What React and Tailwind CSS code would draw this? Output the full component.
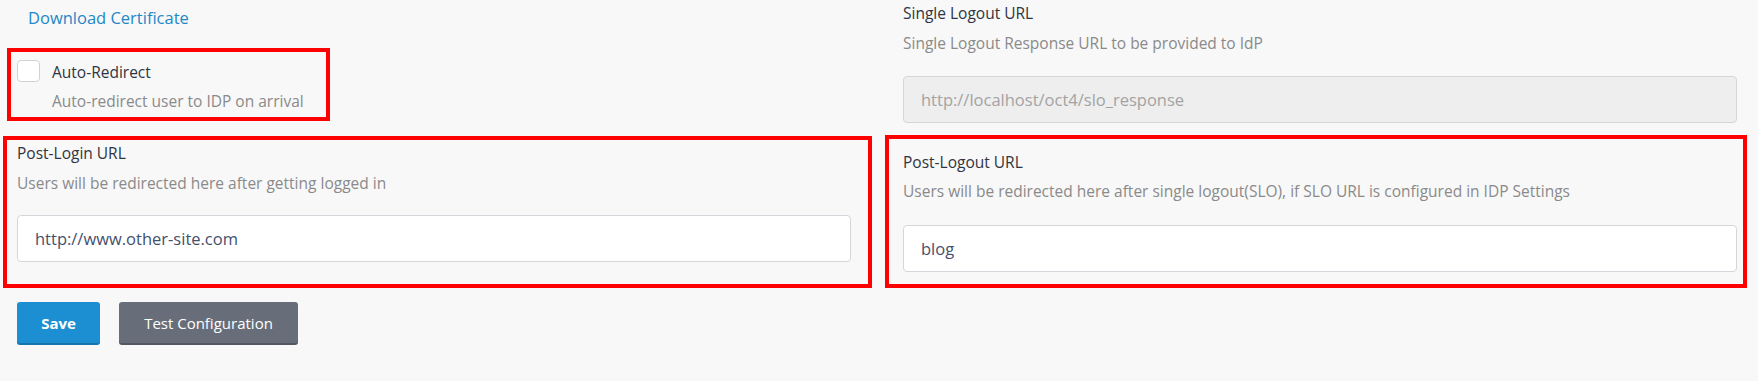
import React from "react";

export default function App() {
  return (
    <div className="min-h-[381px] w-full bg-[#f8f8f8] font-['Open_Sans',sans-serif] text-[15.5px]">
      <div className="flex pl-[17px] pr-[21px] gap-[52px]">
        {/* Left column */}
        <div className="w-[834px] shrink-0 pt-[6px]">
          <a className="ml-[11px] block text-[16.5px] leading-[24px] text-[#1f87c7]">Download Certificate</a>

          <div className="mt-[18px] ml-[-10px] w-[323px] h-[73px] border-4 border-[#ff0000] pl-[6px] pt-[8px] flex gap-[12px]">
            <div className="w-[23px] h-[22px] shrink-0 rounded-[4px] border border-[#cfd3d7] bg-white"></div>
            <div className="mt-[1px]">
              <div className="leading-[22px] text-[#2f3542]">Auto-Redirect</div>
              <div className="mt-[7px] leading-[22px] text-[#8a8a8a]">Auto-redirect user to IDP on arrival</div>
            </div>
          </div>

          <div className="mt-[15px] ml-[-14px] w-[869px] h-[152px] border-4 border-[#ff0000] pl-[10px] pt-[2px]">
            <div className="leading-[22px] text-[#2f3542]">Post-Login URL</div>
            <div className="mt-[8px] leading-[22px] text-[#8a8a8a]">Users will be redirected here after getting logged in</div>
            <input
              readOnly
              value="http://www.other-site.com"
              className="mt-[21px] block w-[834px] h-[47px] rounded-[4px] border border-[#d3d7db] bg-white pl-[17px] text-[16.5px] text-[#45506c] outline-none"
            />
          </div>

          <div className="mt-[14px] flex gap-[19px]">
            <button className="w-[83px] h-[43px] rounded-[3px] bg-[#1c8fd2] text-white font-bold text-[15px] shadow-[inset_0_-2px_0_rgba(0,0,0,0.18)]">
              Save
            </button>
            <button className="w-[179px] h-[43px] rounded-[3px] bg-[#686e79] text-white text-[15px] shadow-[inset_0_-2px_0_rgba(0,0,0,0.2)]">
              Test Configuration
            </button>
          </div>
        </div>

        {/* Right column */}
        <div className="w-[834px] shrink-0 pt-[2px]">
          <div className="leading-[22px] text-[#2f3542]">Single Logout URL</div>
          <div className="mt-[8px] leading-[22px] text-[#8a8a8a]">Single Logout Response URL to be provided to IdP</div>
          <input
            disabled
            value="http://localhost/oct4/slo_response"
            readOnly
            className="mt-[22px] block w-[834px] h-[47px] rounded-[4px] border border-[#d3d7db] bg-[#eeeeee] pl-[17px] text-[16.5px] text-[#a3a3a3] outline-none"
          />

          <div className="mt-[12px] ml-[-18px] w-[862px] h-[153px] border-4 border-[#ff0000] pl-[14px] pt-[12px]">
            <div className="leading-[22px] text-[#2f3542]">Post-Logout URL</div>
            <div className="mt-[7px] leading-[22px] text-[#8a8a8a]">
              Users will be redirected here after single logout(SLO), if SLO URL is configured in IDP Settings
            </div>
            <input
              readOnly
              value="blog"
              className="mt-[23px] block w-[834px] h-[47px] rounded-[4px] border border-[#d3d7db] bg-white pl-[17px] text-[16.5px] text-[#45506c] outline-none"
            />
          </div>
        </div>
      </div>
    </div>
  );
}
